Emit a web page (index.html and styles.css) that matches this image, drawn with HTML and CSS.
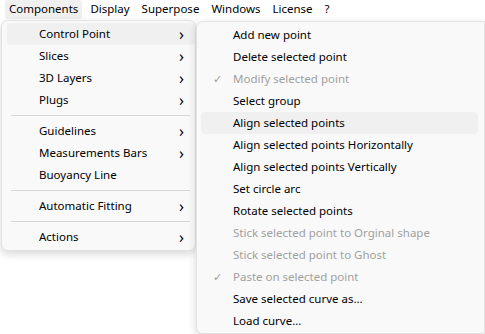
FILE: index.html
```html
<!DOCTYPE html>
<html lang="en">
<head>
    <meta charset="UTF-8">
    <title>Components menu</title>
    <link rel="stylesheet" href="styles.css">
</head>
<body>
    <div class="menubar">
        <span class="top-item active">Components</span>
        <span class="top-item">Display</span>
        <span class="top-item">Superpose</span>
        <span class="top-item">Windows</span>
        <span class="top-item">License</span>
        <span class="top-item">?</span>
    </div>

    <!-- Components dropdown -->
    <div class="menu main-menu">
        <div class="item hover"><span class="label">Control Point</span><span class="arrow">&#x203A;</span></div>
        <div class="item"><span class="label">Slices</span><span class="arrow">&#x203A;</span></div>
        <div class="item"><span class="label">3D Layers</span><span class="arrow">&#x203A;</span></div>
        <div class="item"><span class="label">Plugs</span><span class="arrow">&#x203A;</span></div>
        <div class="sep"></div>
        <div class="item"><span class="label">Guidelines</span><span class="arrow">&#x203A;</span></div>
        <div class="item"><span class="label">Measurements Bars</span><span class="arrow">&#x203A;</span></div>
        <div class="item"><span class="label">Buoyancy Line</span></div>
        <div class="sep"></div>
        <div class="item"><span class="label">Automatic Fitting</span><span class="arrow">&#x203A;</span></div>
        <div class="sep"></div>
        <div class="item"><span class="label">Actions</span><span class="arrow">&#x203A;</span></div>
    </div>

    <!-- Control Point submenu -->
    <div class="menu sub-menu">
        <div class="item"><span class="check"></span><span class="label">Add new point</span></div>
        <div class="item"><span class="check"></span><span class="label">Delete selected point</span></div>
        <div class="item disabled"><span class="check">&#x2713;</span><span class="label">Modify selected point</span></div>
        <div class="item"><span class="check"></span><span class="label">Select group</span></div>
        <div class="item hover"><span class="check"></span><span class="label">Align selected points</span></div>
        <div class="item"><span class="check"></span><span class="label">Align selected points Horizontally</span></div>
        <div class="item"><span class="check"></span><span class="label">Align selected points Vertically</span></div>
        <div class="item"><span class="check"></span><span class="label">Set circle arc</span></div>
        <div class="item"><span class="check"></span><span class="label">Rotate selected points</span></div>
        <div class="item disabled"><span class="check"></span><span class="label">Stick selected point to Orginal shape</span></div>
        <div class="item disabled"><span class="check"></span><span class="label">Stick selected point to Ghost</span></div>
        <div class="item disabled"><span class="check">&#x2713;</span><span class="label">Paste on selected point</span></div>
        <div class="item"><span class="check"></span><span class="label">Save selected curve as...</span></div>
        <div class="item"><span class="check"></span><span class="label">Load curve...</span></div>
    </div>
</body>
</html>
```

FILE: styles.css
```css
body {
    margin: 0;
    background-color: #fff;
    font-family: "Noto Sans", "Open Sans", sans-serif;
    font-size: 11.5px;
    color: #000;
    width: 485px;
    height: 334px;
    overflow: hidden;
    position: relative;
}
.menubar {
    display: flex;
    height: 20px;
    padding-left: 5px;
    align-items: flex-start;
}
.top-item {
    padding: 0 4px;
    margin-right: 4px;
    height: 19px;
    line-height: 18px;
}
.top-item.active {
    background-color: #f0f0f0;
    border-radius: 3px;
}
.menu {
    position: absolute;
    background-color: #f9f9f9;
    border: 1px solid #e3e3e3;
    border-radius: 7px;
    box-shadow: 0 3px 8px rgba(0, 0, 0, 0.16);
    box-sizing: border-box;
}
.main-menu {
    left: 1px;
    top: 20px;
    width: 195px;
    height: 231px;
    padding: 2px 0 0 5px;
}
.sub-menu {
    left: 196px;
    top: 21px;
    width: 289px;
    height: 313px;
    padding: 2px 6px 0 4px;
    border-radius: 7px 0 0 7px;
}
.item {
    display: flex;
    align-items: center;
    height: 22px;
    line-height: 20px;
    padding-bottom: 1px;
    box-sizing: border-box;
    border-radius: 4px;
}
.item.hover {
    background-color: #f0f0f0;
}
.main-menu .label {
    padding-left: 32px;
    flex: 1;
}
.arrow {
    width: 16px;
    font-size: 16px;
    line-height: 16px;
}
.check {
    width: 32px;
    text-align: center;
    color: #9b9b9b;
    font-size: 11px;
}
.disabled {
    color: #a0a0a0;
}
.sep {
    height: 1px;
    background-color: #d6d6d6;
    margin: 4px 5px 4px 4px;
}
```
